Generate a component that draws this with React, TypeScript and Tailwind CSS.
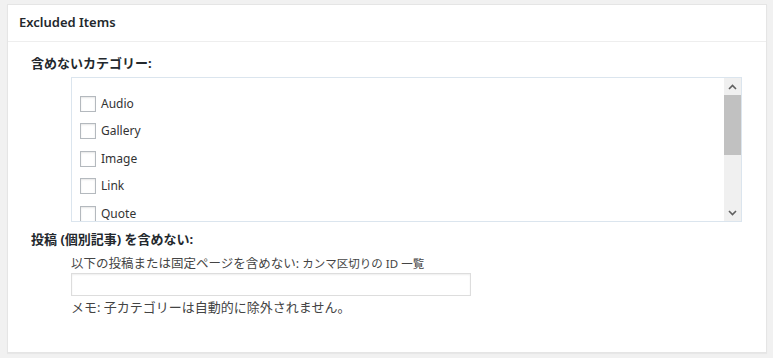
import React from "react";

const font = { fontFamily: '"Noto Sans", "Noto Sans CJK JP", sans-serif' };

function Box() {
  return <span className="inline-block w-4 h-4 border border-[#b4b9be] bg-white shadow-[inset_0_1px_2px_rgba(0,0,0,0.1)] shrink-0" />;
}

export default function App() {
  const items = ["Audio", "Gallery", "Image", "Link", "Quote"];
  return (
    <div className="w-[773px] h-[358px] bg-[#f1f1f1] pt-[4px] pl-[7px] text-[#444]" style={font}>
      <div className="w-[760px] h-[349px] bg-white border border-[#e5e5e5] shadow-[0_1px_1px_rgba(0,0,0,0.04)]">
        <div className="h-[37px] border-b border-[#eeeeee] pl-[11px] flex items-center">
          <span className="text-[13px] font-semibold text-[#23282d]">Excluded Items</span>
        </div>
        <div className="pl-[23px] pt-[12px]">
          <div className="text-[13px] font-bold text-[#23282d] leading-[18px]">含めないカテゴリー:</div>
          <div className="ml-[40px] mt-[5px] w-[671px] h-[145px] border border-[#dbe5ee] flex overflow-hidden">
            <div className="flex-1 pt-[12px] pl-[8px] overflow-hidden">
              {items.map((it) => (
                <div key={it} className="h-[27.5px] flex items-center gap-[5px]">
                  <Box />
                  <span className="text-[12px] text-[#333]">{it}</span>
                </div>
              ))}
            </div>
            <div className="w-[17px] bg-[#f0f0f0] flex flex-col">
              <div className="h-[17px] flex items-center justify-center">
                <svg width="9" height="6" viewBox="0 0 9 6"><path d="M1 5 L4.5 1.5 L8 5" stroke="#606060" strokeWidth="1.6" fill="none" /></svg>
              </div>
              <div className="h-[60px] bg-[#c1c1c1]" />
              <div className="flex-1" />
              <div className="h-[17px] flex items-center justify-center">
                <svg width="9" height="6" viewBox="0 0 9 6"><path d="M1 1 L4.5 4.5 L8 1" stroke="#606060" strokeWidth="1.6" fill="none" /></svg>
              </div>
            </div>
          </div>
          <div className="mt-[8px] text-[13px] font-bold text-[#23282d] leading-[18px]">投稿 (個別記事) を含めない:</div>
          <div className="ml-[40px] mt-[8px]">
            <div className="text-[12.5px] text-[#444] leading-[16px]">
              以下の投稿または固定ページを含めない: <span className="text-[11.5px]">カンマ区切りの ID 一覧</span>
            </div>
            <div className="mt-[1px] w-[400px] h-[23px] border border-[#dddddd] bg-white shadow-[inset_0_1px_2px_rgba(0,0,0,0.07)]" />
            <div className="mt-[3px] text-[13px] text-[#444] leading-[17px]">メモ: 子カテゴリーは自動的に除外されません。</div>
          </div>
        </div>
      </div>
    </div>
  );
}
